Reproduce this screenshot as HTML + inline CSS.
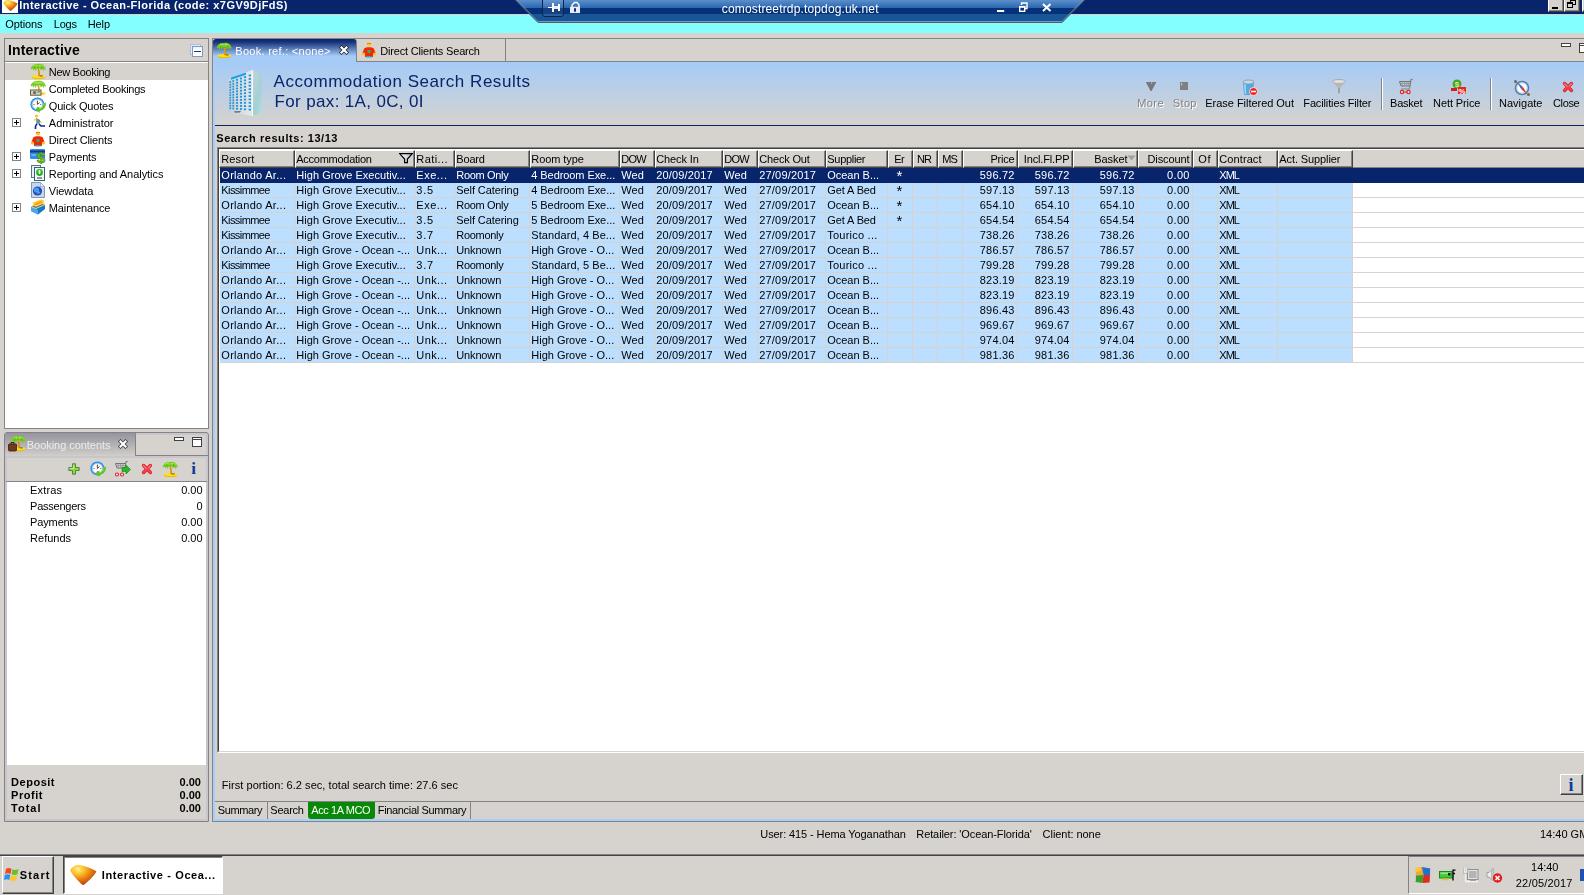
<!DOCTYPE html>
<html lang="en"><head><meta charset="utf-8"><title>Interactive - Ocean-Florida</title>
<style>
html,body{margin:0;padding:0;background:#d6d3ce;overflow:hidden;}
#root{position:relative;width:1584px;height:895px;overflow:hidden;background:#d6d3ce;font-family:"Liberation Sans",sans-serif;font-size:11px;color:#000;}
#root div,#root span.t,#root svg{position:absolute;}
#root div{box-sizing:border-box;}
span.t{white-space:pre;}
.hc{background:#d6d3ce;border-left:1px solid #fff;border-top:1px solid #fff;border-right:1px solid #424142;border-bottom:1px solid #424142;box-shadow:inset -1px -1px 0 #848284;}
.row{left:220px;height:15px;}
.vl{top:183px;width:1px;height:180px;background:#d6d3ce;}
.hl{left:220px;width:1364px;height:1px;background:#d6d3ce;}
.btn{background:#d6d3ce;border-left:1px solid #fff;border-top:1px solid #fff;border-right:1px solid #424142;border-bottom:1px solid #424142;box-shadow:inset -1px -1px 0 #848284;}
.exp{width:9px;height:9px;border:1px solid #848284;background:#fff;}
.exp:before{content:"";position:absolute;left:1px;top:3px;width:5px;height:1px;background:#000;}
.exp:after{content:"";position:absolute;left:3px;top:1px;width:1px;height:5px;background:#000;}
#txt{left:0;top:0;width:1584px;height:895px;will-change:transform;}

</style></head>
<body>
<div id="root">
<div style="left:0px;top:0px;width:1584px;height:14px;background:#08246b"></div>
<div style="left:2px;top:0px;width:16px;height:13px;background:#fff"></div>
<svg style="left:3px;top:0px" width="15" height="11" viewBox="0 0 18 13"><defs><radialGradient id="aia" cx="0.3" cy="0.22" r="0.85"><stop offset="0" stop-color="#fff0a0"/><stop offset="0.25" stop-color="#ffc830"/><stop offset="0.6" stop-color="#e87c10"/><stop offset="1" stop-color="#a83c08"/></radialGradient></defs><path d="M0.5 3.5 C1.5 1.5 3.5 0 6 0 C10 0.5 14 2 17.5 4 C17 6 13 10 9.5 12.8 C8.8 13.2 8 12.8 7.4 12 C5 9.5 2 6.5 0.5 3.5Z" fill="url(#aia)"/></svg>
<div class="btn" style="left:1548px;top:-2px;width:16px;height:14px;"><div style="left:3px;top:8px;width:6px;height:2px;background:#000"></div></div>
<div class="btn" style="left:1564px;top:-2px;width:16px;height:14px;"><div style="left:5px;top:0px;width:6px;height:6px;border:1px solid #000;border-top:2px solid #000"></div><div style="left:2px;top:3px;width:6px;height:6px;border:1px solid #000;border-top:2px solid #000;background:#d6d3ce"></div></div>
<div class="btn" style="left:1582px;top:-2px;width:16px;height:14px;"></div>
<div style="left:0px;top:14px;width:1584px;height:19px;background:#84ffff;border-top:1px solid #d6d3ce"></div>
<svg style="left:510px;top:0" width="580" height="24" viewBox="510 0 580 24"><defs><linearGradient id="rdp" x1="0" y1="0" x2="0" y2="22" gradientUnits="userSpaceOnUse"><stop offset="0" stop-color="#5c8fca"/><stop offset="0.36" stop-color="#2a66ae"/><stop offset="0.37" stop-color="#06327a"/><stop offset="0.64" stop-color="#06327a"/><stop offset="0.65" stop-color="#1a5696"/><stop offset="1" stop-color="#1a5696"/></linearGradient></defs><path d="M515.5 0 L1084.5 0 L1062.5 22 L537.5 22Z" fill="url(#rdp)"/><path d="M516.5 0 L538 21.5 L1062 21.5 L1083.5 0" fill="none" stroke="#6c9cd0" stroke-width="1"/><path d="M515.5 0 L538 22.5 L1062 22.5 L1084.5 0" fill="none" stroke="#5a5a5a" stroke-width="1"/><path d="M542.5 -1 L542.5 14 Q542.5 16.5 545 16.5 L561 16.5 Q563.5 16.5 563.5 14 L563.5 -1Z" fill="rgba(255,255,255,0.07)" stroke="#0a2650" stroke-width="1"/><rect x="548" y="7" width="5" height="1" fill="#fff"/><rect x="552" y="3" width="2" height="9" fill="#fff"/><rect x="554" y="6" width="4.3" height="3" fill="#e8ecf4"/><rect x="558" y="4" width="2" height="7" fill="#fff"/><rect x="570" y="6.7" width="10" height="6.4" fill="#e8ecf4"/><path d="M572 7 L572 5 L574.5 2.6 L577 2.6 L579 5 L579 7" stroke="#f4f6fa" stroke-width="1.5" fill="none"/><rect x="574" y="8.2" width="2" height="3.5" fill="#06327a"/><rect x="997" y="10" width="7.2" height="2" fill="#fff"/><path d="M1021.5 5 L1021.5 3 L1027 3 L1027 8.5 L1025 8.5" stroke="#fff" stroke-width="1.4" fill="none"/><rect x="1019.7" y="6.7" width="5" height="4.6" fill="none" stroke="#fff" stroke-width="1.4"/><rect x="1019" y="6" width="6.4" height="1.6" fill="#fff"/><path d="M1043 4 L1050.5 11 M1050.5 4 L1043 11" stroke="#fff" stroke-width="2"/></svg>
<div style="left:4px;top:38px;width:205px;height:391px;border:1px solid #848284;background:#fff"></div>
<div style="left:5px;top:39px;width:203px;height:23px;background:#d6d3ce;border-bottom:1px solid #848284"></div>
<div style="left:190px;top:44px;width:11px;height:11px;border:1px solid #b0bcd8;background:#dceefc"></div>
<div style="left:192px;top:46px;width:11px;height:11px;border:1px solid #8a96b8;background:linear-gradient(#e4f4ff,#fff 50%)"><div style="left:1px;top:4px;width:7px;height:1px;background:#0a3c80"></div></div>
<div style="left:5px;top:63px;width:203px;height:17px;background:#d6d3ce"></div>
<svg style="left:30px;top:63px" width="16" height="16" viewBox="0 0 16 16"><ellipse cx="8.3" cy="13.9" rx="7" ry="1.9" fill="#ffe210"/><path d="M2 14.6 C5 16 12 16 14.8 14.6" stroke="#e8b400" stroke-width="0.9" fill="none"/><path d="M7.3 5 C7.8 8 8.3 10 8.2 13.4 L10 13.4 C10 10 9.6 7.5 9.2 5Z" fill="#f2a416"/><path d="M8.3 7.5 L9.3 8 M8.6 9.7 L9.7 10.2 M8.6 12 L9.8 12.3" stroke="#a85a10" stroke-width="0.9"/><rect x="10" y="12.4" width="2.6" height="1" fill="#6c4a1c"/><path d="M0.6 5.6 C1.5 2.4 4.6 0.4 8 1 C11.4 0.2 14.6 2.2 15.6 5.4 L15.3 7.4 L14.2 5.6 L13.4 8.2 L12.2 5.6 L10.9 7.6 L9.8 5 L8.2 6 L6.8 5 L5.8 8.2 L4.7 5.6 L3.3 7.8 L2.6 5.4 L1 6.6Z" fill="#74cc20"/><path d="M2.5 4 C4 1.8 6 1.4 8 2.2 C10 1.2 12.5 1.8 14 4 C12 3 10 3 8 4 C6 3 4 3 2.5 4Z" fill="#a4e44c"/><path d="M8 2 L8 5.5 M5 3 L4.5 6 M11.5 3 L12 6" stroke="#4ca810" stroke-width="0.7"/></svg>
<svg style="left:30px;top:80px" width="16" height="16" viewBox="0 0 16 16"><ellipse cx="12" cy="13.6" rx="3.6" ry="1.4" fill="#ffd810"/><path d="M7.3 5 C7.8 8 8.3 9 8.2 11 L10 11 C10 9 9.6 7.5 9.2 5Z" fill="#f2a416"/><path d="M0.6 5.6 C1.5 2.4 4.6 0.4 8 1 C11.4 0.2 14.6 2.2 15.6 5.4 L15.3 7.4 L14.2 5.6 L13.4 8.2 L12.2 5.6 L10.9 7.6 L9.8 5 L8.2 6 L6.8 5 L5.8 8.2 L4.7 5.6 L3.3 7.8 L2.6 5.4 L1 6.6Z" fill="#74cc20"/><path d="M2.5 4 C4 1.8 6 1.4 8 2.2 C10 1.2 12.5 1.8 14 4 C12 3 10 3 8 4 C6 3 4 3 2.5 4Z" fill="#a4e44c"/><rect x="0.5" y="10" width="10.5" height="5.2" fill="#d6d4b8" stroke="#5c5a48" stroke-width="1"/><circle cx="4.6" cy="12.6" r="1.7" fill="#7c6468"/><rect x="7.4" y="11.4" width="2.4" height="1" fill="#5c5a48"/></svg>
<svg style="left:30px;top:97px" width="16" height="16" viewBox="0 0 16 16"><circle cx="7.4" cy="7.4" r="7" fill="#1c8cf4"/><circle cx="7.4" cy="7.4" r="6" fill="#4cb0ff"/><circle cx="7.4" cy="7.4" r="5" fill="#fcfcfc" stroke="#c8b8b0" stroke-width="0.6"/><path d="M7.4 4 L7.4 7.4 L9.6 5.6" stroke="#503828" stroke-width="0.9" fill="none"/><circle cx="4" cy="7.4" r="0.5" fill="#333"/><circle cx="10.8" cy="7.4" r="0.5" fill="#333"/><circle cx="7.4" cy="10.8" r="0.5" fill="#333"/><circle cx="7.4" cy="4" r="0.5" fill="#333"/><path d="M15.8 5.5 C16.4 10.5 13 13.6 9.6 13.4 L9.8 15.8 L4.8 12.6 L9.4 9.6 L9.5 11.4 C12 11.4 13.6 9.4 13.4 6.4Z" fill="#5cc424"/><path d="M9.5 11.4 C12 11.4 13.6 9.4 13.4 6.4" stroke="#9ae060" stroke-width="0.7" fill="none"/></svg>
<svg style="left:30px;top:114px" width="16" height="16" viewBox="0 0 16 16"><circle cx="6.5" cy="2" r="1.6" fill="#ffc020"/><path d="M6 4 L10 6 L9.5 10 L6.5 9Z" fill="#3c78c8"/><path d="M7 5 L9 6 L8.5 9 L7 8.5Z" fill="#70b030"/><path d="M4 6 L7 5.5 M10 7 L11.5 9" stroke="#ffb020" stroke-width="1.2"/><path d="M7 9.5 L5.5 12.5 L5.5 15 M9 10 L11 12 L15 12" stroke="#10208c" stroke-width="1.6" fill="none"/></svg>
<div class="exp" style="left:12px;top:118px;width:9px;height:9px;"></div>
<svg style="left:30px;top:131px" width="16" height="16" viewBox="0 0 16 16"><ellipse cx="8" cy="2.5" rx="2.3" ry="2" fill="#ffc828"/><path d="M6 1.5 L10 1.5" stroke="#e08000" stroke-width="1"/><path d="M3 7 C3 4.5 13 4.5 13 7 L14.5 11 L12 12 L12 15 L4 15 L4 12 L1.5 11Z" fill="#f02808"/><circle cx="2.5" cy="12" r="1.6" fill="#ffc020"/><circle cx="13.5" cy="12" r="1.6" fill="#ffc020"/><rect x="6.5" y="8" width="3" height="3" fill="#30b060"/><rect x="5" y="14" width="6" height="1.5" fill="#40a0c0"/></svg>
<svg style="left:30px;top:148px" width="16" height="16" viewBox="0 0 16 16"><rect x="0" y="1" width="15" height="10" rx="1" fill="#2f8be8"/><rect x="0" y="2.5" width="15" height="2" fill="#103c80"/><rect x="1.5" y="6.5" width="5" height="1" fill="#a0d0ff"/><text x="11" y="15" font-size="15" font-weight="bold" text-anchor="middle" fill="#78c818" stroke="#3c8008" stroke-width="0.5" font-family="Liberation Sans,sans-serif">$</text></svg>
<div class="exp" style="left:12px;top:152px;width:9px;height:9px;"></div>
<svg style="left:30px;top:165px" width="16" height="16" viewBox="0 0 16 16"><rect x="1.5" y="0.5" width="9" height="12" fill="#e8f0f4" stroke="#50788c"/><rect x="4.5" y="2.5" width="10" height="13" fill="#f4f8fa" stroke="#386078"/><circle cx="9.5" cy="7.5" r="3.4" fill="#20b020"/><circle cx="9.5" cy="6.8" r="2" fill="#60e040"/><path d="M9.5 5 L9.5 9" stroke="#fff" stroke-width="1.2"/><path d="M7 13 L12 13" stroke="#303030" stroke-width="1"/></svg>
<div class="exp" style="left:12px;top:169px;width:9px;height:9px;"></div>
<svg style="left:30px;top:182px" width="16" height="16" viewBox="0 0 16 16"><path d="M1.5 0.5 L10.5 0.5 L14.5 4.5 L14.5 15.5 L1.5 15.5Z" fill="#c8d8ec" stroke="#8098b8"/><path d="M10.5 0.5 L10.5 4.5 L14.5 4.5Z" fill="#f0f4fa" stroke="#8098b8" stroke-width="0.6"/><circle cx="7.5" cy="9" r="4.6" fill="#2848c8"/><circle cx="6.5" cy="8" r="2.6" fill="#40a0f0"/><path d="M5 10 C7 13 10 12 11 9 C9 11 7 11 5 10Z" fill="#a040c0"/><circle cx="8.5" cy="10.5" r="1.3" fill="#30c0c0"/></svg>
<svg style="left:30px;top:199px" width="16" height="16" viewBox="0 0 16 16"><path d="M1 8 L10 4 L15 6 L15 10 L8 15.5 L1 12Z" fill="#1878c8"/><path d="M1 8 L8 11 L8 15.5 L1 12Z" fill="#48a8f0"/><path d="M2 4 L11 0.5 L15 2 L6 6Z" fill="#ffc820"/><path d="M2 6 L11 2.5 L15 4 L6 8Z" fill="#ff9810"/><path d="M2 5 L6 7 L15 3" stroke="#fff0a0" stroke-width="0.8" fill="none"/><path d="M2 8 L6 9.5 L15 5.5" stroke="#ffd860" stroke-width="1" fill="none"/></svg>
<div class="exp" style="left:12px;top:203px;width:9px;height:9px;"></div>
<div style="left:4px;top:432px;width:205px;height:390px;border:1px solid #848284;border-radius:3px 3px 0 0;background:#d6d3ce;box-shadow:inset 0 0 0 2px #c8c6cc"></div>
<div style="left:5px;top:433px;width:131px;height:23px;background:linear-gradient(#96949c,#b2b0b6 50%,#d2cec8);border-right:1px solid #848284;border-radius:2px 0 0 0"></div>
<div style="left:136px;top:455px;width:72px;height:1px;background:#848284"></div>
<svg style="left:8px;top:435px" width="18" height="18" viewBox="0 0 18 18"><g transform="translate(2,0)"><ellipse cx="8.3" cy="13.9" rx="7" ry="1.9" fill="#ffe210"/><path d="M2 14.6 C5 16 12 16 14.8 14.6" stroke="#e8b400" stroke-width="0.9" fill="none"/><path d="M7.3 5 C7.8 8 8.3 10 8.2 13.4 L10 13.4 C10 10 9.6 7.5 9.2 5Z" fill="#f2a416"/><path d="M8.3 7.5 L9.3 8 M8.6 9.7 L9.7 10.2 M8.6 12 L9.8 12.3" stroke="#a85a10" stroke-width="0.9"/><rect x="10" y="12.4" width="2.6" height="1" fill="#6c4a1c"/><path d="M0.6 5.6 C1.5 2.4 4.6 0.4 8 1 C11.4 0.2 14.6 2.2 15.6 5.4 L15.3 7.4 L14.2 5.6 L13.4 8.2 L12.2 5.6 L10.9 7.6 L9.8 5 L8.2 6 L6.8 5 L5.8 8.2 L4.7 5.6 L3.3 7.8 L2.6 5.4 L1 6.6Z" fill="#74cc20"/><path d="M2.5 4 C4 1.8 6 1.4 8 2.2 C10 1.2 12.5 1.8 14 4 C12 3 10 3 8 4 C6 3 4 3 2.5 4Z" fill="#a4e44c"/><path d="M8 2 L8 5.5 M5 3 L4.5 6 M11.5 3 L12 6" stroke="#4ca810" stroke-width="0.7"/></g><rect x="0.5" y="9" width="8" height="7" rx="1" fill="#6c3c20" stroke="#3c1c08" stroke-width="0.8"/><path d="M3 9 L3 7.5 L6 7.5 L6 9" stroke="#3c1c08" fill="none"/></svg>
<svg style="left:117px;top:438px" width="12" height="12" viewBox="0 0 12 12"><path d="M3.5 3.5 L8.5 8.5 M8.5 3.5 L3.5 8.5" stroke="#383838" stroke-width="3.6" stroke-linecap="square"/><path d="M3.5 3.5 L8.5 8.5 M8.5 3.5 L3.5 8.5" stroke="#fff" stroke-width="2.2" stroke-linecap="square"/></svg>
<div style="left:174px;top:437px;width:10px;height:4px;border:1px solid #424142;background:#fff"></div>
<div style="left:192px;top:437px;width:10px;height:10px;border:1px solid #424142;background:#fff"><div style="left:0px;top:1px;width:8px;height:1px;background:#424142"></div></div>
<div style="left:5px;top:456px;width:203px;height:26px;border-bottom:1px solid #848284;border-left:2px solid #c8c6cc;border-right:2px solid #c8c6cc;border-top:2px solid #c8c6cc"></div>
<svg style="left:68px;top:463px" width="12" height="12" viewBox="0 0 12 12"><path d="M4.5 0.8 L7.5 0.8 L7.5 4.5 L11.2 4.5 L11.2 7.5 L7.5 7.5 L7.5 11.2 L4.5 11.2 L4.5 7.5 L0.8 7.5 L0.8 4.5 L4.5 4.5Z" fill="#a4cc44" stroke="#3c9040" stroke-width="1"/><path d="M5.4 1.8 L5.4 5.4 L1.8 5.4" stroke="#d4ec90" stroke-width="0.9" fill="none"/></svg>
<svg style="left:90px;top:461px" width="16" height="16" viewBox="0 0 16 16"><circle cx="7.4" cy="7.4" r="7" fill="#1c8cf4"/><circle cx="7.4" cy="7.4" r="6" fill="#4cb0ff"/><circle cx="7.4" cy="7.4" r="5" fill="#fcfcfc" stroke="#c8b8b0" stroke-width="0.6"/><path d="M7.4 4 L7.4 7.4 L9.6 5.6" stroke="#503828" stroke-width="0.9" fill="none"/><circle cx="4" cy="7.4" r="0.5" fill="#333"/><circle cx="10.8" cy="7.4" r="0.5" fill="#333"/><circle cx="7.4" cy="10.8" r="0.5" fill="#333"/><circle cx="7.4" cy="4" r="0.5" fill="#333"/><path d="M15.8 5.5 C16.4 10.5 13 13.6 9.6 13.4 L9.8 15.8 L4.8 12.6 L9.4 9.6 L9.5 11.4 C12 11.4 13.6 9.4 13.4 6.4Z" fill="#5cc424"/><path d="M9.5 11.4 C12 11.4 13.6 9.4 13.4 6.4" stroke="#9ae060" stroke-width="0.7" fill="none"/></svg>
<svg style="left:114px;top:461px" width="17" height="16" viewBox="0 0 17 16"><path d="M13.5 0.5 L12 0.5 L11 7 L3 7 L1.5 2.5 L11.5 2.5" fill="none" stroke="#707070" stroke-width="1"/><path d="M4 2.5 L4.5 7 M6.5 2.5 L6.7 7 M9 2.5 L8.8 7 M2 4.5 L11.3 4.5" stroke="#909090" stroke-width="0.8"/><circle cx="3" cy="13.5" r="1.5" fill="#fff" stroke="#e02020" stroke-width="1.1"/><circle cx="8" cy="13.5" r="1.5" fill="#fff" stroke="#e02020" stroke-width="1.1"/><path d="M8 6.5 L12 6.5 L12 4 L16.5 8.5 L12 13 L12 10.5 L8 10.5Z" fill="#28b828" stroke="#108010" stroke-width="0.6"/></svg>
<svg style="left:140.5px;top:463px" width="12" height="12" viewBox="0 0 14 14"><path d="M3 3 L11 11 M11 3 L3 11" stroke="#d82028" stroke-width="4" stroke-linecap="round"/><path d="M3 3 L11 11 M11 3 L3 11" stroke="#f04048" stroke-width="2.8" stroke-linecap="round"/><path d="M3 3.4 L6 6.4 M11 3.4 L8.6 5.8" stroke="#f88088" stroke-width="1.2" stroke-linecap="round"/></svg>
<svg style="left:162px;top:461px" width="16" height="16" viewBox="0 0 16 16"><ellipse cx="8.3" cy="13.9" rx="7" ry="1.9" fill="#ffe210"/><path d="M2 14.6 C5 16 12 16 14.8 14.6" stroke="#e8b400" stroke-width="0.9" fill="none"/><path d="M7.3 5 C7.8 8 8.3 10 8.2 13.4 L10 13.4 C10 10 9.6 7.5 9.2 5Z" fill="#f2a416"/><path d="M8.3 7.5 L9.3 8 M8.6 9.7 L9.7 10.2 M8.6 12 L9.8 12.3" stroke="#a85a10" stroke-width="0.9"/><rect x="10" y="12.4" width="2.6" height="1" fill="#6c4a1c"/><path d="M0.6 5.6 C1.5 2.4 4.6 0.4 8 1 C11.4 0.2 14.6 2.2 15.6 5.4 L15.3 7.4 L14.2 5.6 L13.4 8.2 L12.2 5.6 L10.9 7.6 L9.8 5 L8.2 6 L6.8 5 L5.8 8.2 L4.7 5.6 L3.3 7.8 L2.6 5.4 L1 6.6Z" fill="#74cc20"/><path d="M2.5 4 C4 1.8 6 1.4 8 2.2 C10 1.2 12.5 1.8 14 4 C12 3 10 3 8 4 C6 3 4 3 2.5 4Z" fill="#a4e44c"/><path d="M8 2 L8 5.5 M5 3 L4.5 6 M11.5 3 L12 6" stroke="#4ca810" stroke-width="0.7"/></svg>
<span class="t" style="left:191.3px;top:460px;font-family:&quot;Liberation Serif&quot;,serif;font-weight:bold;font-size:17px;line-height:17px;color:#0a3c9c">i</span>
<div style="left:7px;top:482px;width:199px;height:283px;background:#fff"></div>
<div style="left:212px;top:38px;width:1372px;height:1px;background:#848284"></div>
<div style="left:212px;top:39px;width:1px;height:23px;background:#848284"></div>
<div style="left:356px;top:61px;width:1228px;height:1px;background:#848284"></div>
<div style="left:505px;top:39px;width:1px;height:23px;background:#848284"></div>
<div style="left:213px;top:39px;width:144px;height:23px;background:linear-gradient(#08246b 0,#16327a 3px,#a5cbf7 17px,#a5cbf7);border-radius:3px 3px 0 0;border-right:1px solid #848284"></div>
<svg style="left:216px;top:42px" width="16" height="16" viewBox="0 0 16 16"><ellipse cx="8.3" cy="13.9" rx="7" ry="1.9" fill="#ffe210"/><path d="M2 14.6 C5 16 12 16 14.8 14.6" stroke="#e8b400" stroke-width="0.9" fill="none"/><path d="M7.3 5 C7.8 8 8.3 10 8.2 13.4 L10 13.4 C10 10 9.6 7.5 9.2 5Z" fill="#f2a416"/><path d="M8.3 7.5 L9.3 8 M8.6 9.7 L9.7 10.2 M8.6 12 L9.8 12.3" stroke="#a85a10" stroke-width="0.9"/><rect x="10" y="12.4" width="2.6" height="1" fill="#6c4a1c"/><path d="M0.6 5.6 C1.5 2.4 4.6 0.4 8 1 C11.4 0.2 14.6 2.2 15.6 5.4 L15.3 7.4 L14.2 5.6 L13.4 8.2 L12.2 5.6 L10.9 7.6 L9.8 5 L8.2 6 L6.8 5 L5.8 8.2 L4.7 5.6 L3.3 7.8 L2.6 5.4 L1 6.6Z" fill="#74cc20"/><path d="M2.5 4 C4 1.8 6 1.4 8 2.2 C10 1.2 12.5 1.8 14 4 C12 3 10 3 8 4 C6 3 4 3 2.5 4Z" fill="#a4e44c"/><path d="M8 2 L8 5.5 M5 3 L4.5 6 M11.5 3 L12 6" stroke="#4ca810" stroke-width="0.7"/></svg>
<svg style="left:338.2px;top:44px" width="12" height="12" viewBox="0 0 12 12"><path d="M3.5 3.5 L8.5 8.5 M8.5 3.5 L3.5 8.5" stroke="#202020" stroke-width="3.6" stroke-linecap="square"/><path d="M3.5 3.5 L8.5 8.5 M8.5 3.5 L3.5 8.5" stroke="#fff" stroke-width="2.2" stroke-linecap="square"/></svg>
<svg style="left:361px;top:42px" width="16" height="16" viewBox="0 0 16 16"><ellipse cx="8" cy="2.5" rx="2.3" ry="2" fill="#ffc828"/><path d="M6 1.5 L10 1.5" stroke="#e08000" stroke-width="1"/><path d="M3 7 C3 4.5 13 4.5 13 7 L14.5 11 L12 12 L12 15 L4 15 L4 12 L1.5 11Z" fill="#f02808"/><circle cx="2.5" cy="12" r="1.6" fill="#ffc020"/><circle cx="13.5" cy="12" r="1.6" fill="#ffc020"/><rect x="6.5" y="8" width="3" height="3" fill="#30b060"/><rect x="5" y="14" width="6" height="1.5" fill="#40a0c0"/></svg>
<div style="left:1561px;top:43px;width:10px;height:4px;border:1px solid #424142;background:#fff"></div>
<div style="left:1579px;top:43px;width:10px;height:10px;border:1px solid #424142;background:#fff"><div style="left:0px;top:1px;width:8px;height:1px;background:#424142"></div></div>
<div style="left:212px;top:39px;width:1px;height:783px;background:#848284"></div>
<div style="left:212px;top:821px;width:1372px;height:1px;background:#848284"></div>
<div style="left:213px;top:62px;width:2px;height:759px;background:#a5cfff"></div>
<div style="left:213px;top:819px;width:1371px;height:2px;background:#a5cfff"></div>
<div style="left:215px;top:62px;width:1369px;height:63px;background:linear-gradient(#a5cbf7,#d6d3ce)"></div>
<div style="left:215px;top:125px;width:1369px;height:1px;background:#08246b"></div>
<svg style="left:226px;top:68px" width="38" height="50" viewBox="0 0 38 50"><defs><linearGradient id="bs" x1="0" x2="1" y1="0" y2="1"><stop offset="0" stop-color="#c4d4d8"/><stop offset="0.6" stop-color="#a4d0d6"/><stop offset="1" stop-color="#b4e0e4"/></linearGradient><linearGradient id="bf" x1="0" x2="1"><stop offset="0" stop-color="#c4ced4"/><stop offset="1" stop-color="#e6eaec"/></linearGradient></defs><path d="M2 10 L26.5 2 L26.5 48 L2 44Z" fill="url(#bf)"/><path d="M26.5 2 L36 6 L36 44.5 L26.5 48Z" fill="url(#bs)"/><path d="M26.5 2 L26.5 48" stroke="#f8fafa" stroke-width="1"/><path d="M5 9.4 L20 4.4 L20 6.8 L5 11.8Z" fill="#10a4f4"/><rect x="3.5" y="13.2" width="1.6" height="1.8" fill="#1c94e4"/><rect x="3.5" y="15.8" width="1.6" height="1.8" fill="#1c94e4"/><rect x="3.5" y="18.4" width="1.6" height="1.8" fill="#1c94e4"/><rect x="3.5" y="21.1" width="1.6" height="1.8" fill="#1c94e4"/><rect x="3.5" y="23.7" width="1.6" height="1.8" fill="#1c94e4"/><rect x="3.5" y="26.3" width="1.6" height="1.8" fill="#1c94e4"/><rect x="3.5" y="28.9" width="1.6" height="1.8" fill="#1c94e4"/><rect x="3.5" y="31.5" width="1.6" height="1.8" fill="#1c94e4"/><rect x="3.5" y="34.2" width="1.6" height="1.8" fill="#1c94e4"/><rect x="3.5" y="36.8" width="1.6" height="1.8" fill="#1c94e4"/><rect x="3.5" y="39.4" width="1.6" height="1.8" fill="#1c94e4"/><rect x="6.4" y="12.2" width="1.7" height="1.8" fill="#1c94e4"/><rect x="6.4" y="14.9" width="1.7" height="1.8" fill="#1c94e4"/><rect x="6.4" y="17.7" width="1.7" height="1.8" fill="#1c94e4"/><rect x="6.4" y="20.4" width="1.7" height="1.8" fill="#1c94e4"/><rect x="6.4" y="23.2" width="1.7" height="1.8" fill="#1c94e4"/><rect x="6.4" y="25.9" width="1.7" height="1.8" fill="#1c94e4"/><rect x="6.4" y="28.6" width="1.7" height="1.8" fill="#1c94e4"/><rect x="6.4" y="31.4" width="1.7" height="1.8" fill="#1c94e4"/><rect x="6.4" y="34.1" width="1.7" height="1.8" fill="#1c94e4"/><rect x="6.4" y="36.9" width="1.7" height="1.8" fill="#1c94e4"/><rect x="6.4" y="39.6" width="1.7" height="1.8" fill="#1c94e4"/><rect x="10.1" y="10.9" width="1.9" height="1.8" fill="#1c94e4"/><rect x="10.1" y="13.8" width="1.9" height="1.8" fill="#1c94e4"/><rect x="10.1" y="16.7" width="1.9" height="1.8" fill="#1c94e4"/><rect x="10.1" y="19.6" width="1.9" height="1.8" fill="#1c94e4"/><rect x="10.1" y="22.5" width="1.9" height="1.8" fill="#1c94e4"/><rect x="10.1" y="25.4" width="1.9" height="1.8" fill="#1c94e4"/><rect x="10.1" y="28.3" width="1.9" height="1.8" fill="#1c94e4"/><rect x="10.1" y="31.2" width="1.9" height="1.8" fill="#1c94e4"/><rect x="10.1" y="34.1" width="1.9" height="1.8" fill="#1c94e4"/><rect x="10.1" y="37.0" width="1.9" height="1.8" fill="#1c94e4"/><rect x="10.1" y="39.9" width="1.9" height="1.8" fill="#1c94e4"/><rect x="14.0" y="9.6" width="2.0" height="1.8" fill="#1c94e4"/><rect x="14.0" y="12.6" width="2.0" height="1.8" fill="#1c94e4"/><rect x="14.0" y="15.7" width="2.0" height="1.8" fill="#1c94e4"/><rect x="14.0" y="18.7" width="2.0" height="1.8" fill="#1c94e4"/><rect x="14.0" y="21.8" width="2.0" height="1.8" fill="#1c94e4"/><rect x="14.0" y="24.8" width="2.0" height="1.8" fill="#1c94e4"/><rect x="14.0" y="27.9" width="2.0" height="1.8" fill="#1c94e4"/><rect x="14.0" y="31.0" width="2.0" height="1.8" fill="#1c94e4"/><rect x="14.0" y="34.0" width="2.0" height="1.8" fill="#1c94e4"/><rect x="14.0" y="37.1" width="2.0" height="1.8" fill="#1c94e4"/><rect x="14.0" y="40.1" width="2.0" height="1.8" fill="#1c94e4"/><rect x="17.9" y="8.2" width="2.2" height="1.8" fill="#1c94e4"/><rect x="17.9" y="11.4" width="2.2" height="1.8" fill="#1c94e4"/><rect x="17.9" y="14.6" width="2.2" height="1.8" fill="#1c94e4"/><rect x="17.9" y="17.9" width="2.2" height="1.8" fill="#1c94e4"/><rect x="17.9" y="21.1" width="2.2" height="1.8" fill="#1c94e4"/><rect x="17.9" y="24.3" width="2.2" height="1.8" fill="#1c94e4"/><rect x="17.9" y="27.5" width="2.2" height="1.8" fill="#1c94e4"/><rect x="17.9" y="30.7" width="2.2" height="1.8" fill="#1c94e4"/><rect x="17.9" y="33.9" width="2.2" height="1.8" fill="#1c94e4"/><rect x="17.9" y="37.2" width="2.2" height="1.8" fill="#1c94e4"/><rect x="17.9" y="40.4" width="2.2" height="1.8" fill="#1c94e4"/><rect x="22.6" y="6.6" width="2.4" height="1.8" fill="#1c94e4"/><rect x="22.6" y="10.0" width="2.4" height="1.8" fill="#1c94e4"/><rect x="22.6" y="13.4" width="2.4" height="1.8" fill="#1c94e4"/><rect x="22.6" y="16.8" width="2.4" height="1.8" fill="#1c94e4"/><rect x="22.6" y="20.2" width="2.4" height="1.8" fill="#1c94e4"/><rect x="22.6" y="23.6" width="2.4" height="1.8" fill="#1c94e4"/><rect x="22.6" y="27.1" width="2.4" height="1.8" fill="#1c94e4"/><rect x="22.6" y="30.5" width="2.4" height="1.8" fill="#1c94e4"/><rect x="22.6" y="33.9" width="2.4" height="1.8" fill="#1c94e4"/><rect x="22.6" y="37.3" width="2.4" height="1.8" fill="#1c94e4"/><rect x="22.6" y="40.7" width="2.4" height="1.8" fill="#1c94e4"/><path d="M8 43.2 L15 43 L14 44.6 L9 44.8Z" fill="#687078"/></svg>
<svg style="left:1142px;top:79px" width="16" height="16" viewBox="0 0 16 16"><path d="M3.8 3 L14.4 3 L9.6 12 L8.6 12Z" fill="#787878"/><rect x="9" y="3.6" width="1.2" height="1" fill="#d8d8d8"/></svg>
<svg style="left:1176px;top:79px" width="16" height="16" viewBox="0 0 16 16"><rect x="4" y="3" width="8" height="8" fill="#808080"/><rect x="5.2" y="4" width="1" height="2.4" fill="#d0d0d0"/></svg>
<svg style="left:1241px;top:79px" width="18" height="18" viewBox="0 0 18 18"><path d="M2 3 L13 3 L12 16 L3 16Z" fill="#58a8e0"/><ellipse cx="7.5" cy="3" rx="5.5" ry="2" fill="#c0d8e8" stroke="#8098a8" stroke-width="0.8"/><path d="M4 5 L4.5 15" stroke="#a0d8ff" stroke-width="1.5"/><circle cx="12.5" cy="12.5" r="4" fill="#f02020" stroke="#fff" stroke-width="0.8"/><rect x="10" y="11.7" width="5" height="1.6" fill="#fff"/></svg>
<svg style="left:1331px;top:79px" width="16" height="16" viewBox="0 0 16 16"><ellipse cx="8" cy="2.5" rx="6.5" ry="2" fill="#e0e0e0" stroke="#a0a0a0" stroke-width="0.8"/><path d="M1.5 3 L7 9 L7 15 L9 14 L9 9 L14.5 3 C12 5 4 5 1.5 3Z" fill="#b8b8b8"/><path d="M8 9 L8 14" stroke="#888" stroke-width="1"/></svg>
<svg style="left:1398px;top:79px" width="16" height="16" viewBox="0 0 16 16"><path d="M14.5 0.5 L13 0.5 L12 7 L3 7 L1.5 2.5 L12.5 2.5" fill="none" stroke="#707070" stroke-width="1"/><path d="M4 2.5 L4.5 7 M6.5 2.5 L6.7 7 M9 2.5 L8.8 7 M11 2.5 L10.5 7 M2 4.5 L12.3 4.5" stroke="#909090" stroke-width="0.8"/><path d="M12 7 L11.5 10 L3 10" fill="none" stroke="#808080" stroke-width="1"/><circle cx="4" cy="13" r="1.6" fill="#fff" stroke="#e02020" stroke-width="1.2"/><circle cx="10.5" cy="13" r="1.6" fill="#fff" stroke="#e02020" stroke-width="1.2"/><path d="M5.5 13 L9 13" stroke="#e02020" stroke-width="1"/></svg>
<svg style="left:1450px;top:79px" width="18" height="16" viewBox="0 0 18 16"><circle cx="7" cy="5" r="4.5" fill="#48a828"/><text x="7" y="8" font-size="8" font-weight="bold" text-anchor="middle" fill="#c8f0a0" font-family="Liberation Sans,sans-serif">$</text><rect x="1" y="9" width="6" height="3" fill="#e01818"/><path d="M8 8 L16 8 L16 15 L8 15Z" fill="#f02020"/><text x="12" y="14.5" font-size="8" font-weight="bold" text-anchor="middle" fill="#fff" font-family="Liberation Sans,sans-serif">%</text></svg>
<svg style="left:1513px;top:79px" width="18" height="18" viewBox="0 0 18 18"><circle cx="9" cy="9" r="6.5" fill="#f4f8ff" stroke="#5080b0" stroke-width="1.6"/><circle cx="9" cy="9" r="5" fill="#fff" stroke="#a0c0e0" stroke-width="0.6"/><path d="M4 3 L10 8 L8 10Z" fill="#3070d0"/><path d="M14 15 L10 8 L8 10Z" fill="#e03020"/><circle cx="2.5" cy="2.5" r="1.5" fill="#806040"/><circle cx="15.5" cy="15.5" r="1.5" fill="#806040"/></svg>
<svg style="left:1562px;top:81px" width="12" height="12" viewBox="0 0 14 14"><path d="M3 3 L11 11 M11 3 L3 11" stroke="#d82028" stroke-width="4" stroke-linecap="round"/><path d="M3 3 L11 11 M11 3 L3 11" stroke="#f04048" stroke-width="2.8" stroke-linecap="round"/><path d="M3 3.4 L6 6.4 M11 3.4 L8.6 5.8" stroke="#f88088" stroke-width="1.2" stroke-linecap="round"/></svg>
<div style="left:1381px;top:78px;width:1px;height:32px;background:#848284"></div>
<div style="left:1382px;top:78px;width:1px;height:32px;background:#fff"></div>
<div style="left:1490px;top:78px;width:1px;height:32px;background:#848284"></div>
<div style="left:1491px;top:78px;width:1px;height:32px;background:#fff"></div>
<div style="left:217px;top:147px;width:1367px;height:606px;background:#fff;border-left:1px solid #848284;border-top:1px solid #848284;border-bottom:1px solid #fff"></div>
<div style="left:218px;top:148px;width:1366px;height:604px;border-left:1px solid #424142;border-top:1px solid #424142;border-bottom:1px solid #d6d3ce"></div>
<div style="left:219px;top:149px;width:1365px;height:19px;background:#d6d3ce;border-bottom:1px solid #848284;border-top:1px solid #fff"></div>
<div style="left:220px;top:168px;width:1364px;height:15px;background:#08246b"></div>
<div style="left:220px;top:183px;width:1133px;height:180px;background:#bddfff"></div>
<div style="left:220px;top:197px;width:1364px;height:1px;background:#d6d3ce"></div>
<div style="left:220px;top:212px;width:1364px;height:1px;background:#d6d3ce"></div>
<div style="left:220px;top:227px;width:1364px;height:1px;background:#d6d3ce"></div>
<div style="left:220px;top:242px;width:1364px;height:1px;background:#d6d3ce"></div>
<div style="left:220px;top:257px;width:1364px;height:1px;background:#d6d3ce"></div>
<div style="left:220px;top:272px;width:1364px;height:1px;background:#d6d3ce"></div>
<div style="left:220px;top:287px;width:1364px;height:1px;background:#d6d3ce"></div>
<div style="left:220px;top:302px;width:1364px;height:1px;background:#d6d3ce"></div>
<div style="left:220px;top:317px;width:1364px;height:1px;background:#d6d3ce"></div>
<div style="left:220px;top:332px;width:1364px;height:1px;background:#d6d3ce"></div>
<div style="left:220px;top:347px;width:1364px;height:1px;background:#d6d3ce"></div>
<div style="left:220px;top:362px;width:1364px;height:1px;background:#d6d3ce"></div>
<div class="hc" style="left:219px;top:150px;width:76px;height:18px;"></div>
<div style="left:294px;top:183px;width:1px;height:180px;background:#d6d3ce"></div>
<div class="hc" style="left:295px;top:150px;width:120px;height:18px;"></div>
<div style="left:414px;top:183px;width:1px;height:180px;background:#d6d3ce"></div>
<div class="hc" style="left:415px;top:150px;width:40px;height:18px;"></div>
<div style="left:454px;top:183px;width:1px;height:180px;background:#d6d3ce"></div>
<div class="hc" style="left:455px;top:150px;width:75px;height:18px;"></div>
<div style="left:529px;top:183px;width:1px;height:180px;background:#d6d3ce"></div>
<div class="hc" style="left:530px;top:150px;width:90px;height:18px;"></div>
<div style="left:619px;top:183px;width:1px;height:180px;background:#d6d3ce"></div>
<div class="hc" style="left:620px;top:150px;width:35px;height:18px;"></div>
<div style="left:654px;top:183px;width:1px;height:180px;background:#d6d3ce"></div>
<div class="hc" style="left:655px;top:150px;width:68px;height:18px;"></div>
<div style="left:722px;top:183px;width:1px;height:180px;background:#d6d3ce"></div>
<div class="hc" style="left:723px;top:150px;width:35px;height:18px;"></div>
<div style="left:757px;top:183px;width:1px;height:180px;background:#d6d3ce"></div>
<div class="hc" style="left:758px;top:150px;width:68px;height:18px;"></div>
<div style="left:825px;top:183px;width:1px;height:180px;background:#d6d3ce"></div>
<div class="hc" style="left:826px;top:150px;width:62px;height:18px;"></div>
<div style="left:887px;top:183px;width:1px;height:180px;background:#d6d3ce"></div>
<div class="hc" style="left:888px;top:150px;width:25px;height:18px;"></div>
<div style="left:912px;top:183px;width:1px;height:180px;background:#d6d3ce"></div>
<div class="hc" style="left:913px;top:150px;width:25px;height:18px;"></div>
<div style="left:937px;top:183px;width:1px;height:180px;background:#d6d3ce"></div>
<div class="hc" style="left:938px;top:150px;width:25px;height:18px;"></div>
<div style="left:962px;top:183px;width:1px;height:180px;background:#d6d3ce"></div>
<div class="hc" style="left:963px;top:150px;width:55px;height:18px;"></div>
<div style="left:1017px;top:183px;width:1px;height:180px;background:#d6d3ce"></div>
<div class="hc" style="left:1018px;top:150px;width:55px;height:18px;"></div>
<div style="left:1072px;top:183px;width:1px;height:180px;background:#d6d3ce"></div>
<div class="hc" style="left:1073px;top:150px;width:65px;height:18px;"></div>
<div style="left:1137px;top:183px;width:1px;height:180px;background:#d6d3ce"></div>
<div class="hc" style="left:1138px;top:150px;width:55px;height:18px;"></div>
<div style="left:1192px;top:183px;width:1px;height:180px;background:#d6d3ce"></div>
<div class="hc" style="left:1193px;top:150px;width:25px;height:18px;"></div>
<div style="left:1217px;top:183px;width:1px;height:180px;background:#d6d3ce"></div>
<div class="hc" style="left:1218px;top:150px;width:60px;height:18px;"></div>
<div style="left:1277px;top:183px;width:1px;height:180px;background:#d6d3ce"></div>
<div class="hc" style="left:1278px;top:150px;width:75px;height:18px;"></div>
<div style="left:1352px;top:183px;width:1px;height:180px;background:#d6d3ce"></div>
<svg style="left:398.5px;top:153px" width="14" height="12" viewBox="0 0 14 12"><defs><linearGradient id="fg" x1="0" x2="1"><stop offset="0" stop-color="#fff"/><stop offset="1" stop-color="#a8b8d0"/></linearGradient></defs><path d="M0.6 0.6 L13.4 0.6 L8.4 6 L8.4 9.6 L5.6 9.6 L5.6 6Z" fill="url(#fg)" stroke="#000" stroke-width="1.2"/></svg>
<svg style="left:1127px;top:155px" width="9" height="6" viewBox="0 0 9 6"><path d="M0.5 0.5 L8.5 0.5 L4.5 5.5Z" fill="#a0a0a0"/></svg>
<div class="btn" style="left:1560px;top:774px;width:23px;height:21px;"></div>
<span class="t" style="left:1568.5px;top:775.5px;font-family:&quot;Liberation Serif&quot;,serif;font-weight:bold;font-size:18px;line-height:18px;color:#0a3c9c">i</span>
<div style="left:215px;top:801px;width:1369px;height:1px;background:#848284"></div>
<div style="left:267px;top:802px;width:1px;height:17px;background:#848284"></div>
<div style="left:308px;top:802px;width:67px;height:17px;background:#088a08;border-radius:0 0 3px 3px"></div>
<div style="left:470px;top:802px;width:1px;height:17px;background:#848284"></div>
<div style="left:0px;top:854px;width:1584px;height:1px;background:#848284"></div>
<div style="left:0px;top:855px;width:1584px;height:1px;background:#424142"></div>
<div class="btn" style="left:2px;top:856px;width:52px;height:38px;"></div>
<svg style="left:4px;top:866px" width="16" height="16" viewBox="0 0 16 16"><path d="M2 3 C4 1.5 6 2 7.5 3 L6.5 8 C5 7 3 6.8 1 8Z" fill="#f04820"/><path d="M8.5 3.3 C10 4.3 12 4.5 14.5 3 L13.5 8 C11.5 9.3 9.5 9 7.5 8.2Z" fill="#68c028"/><path d="M0.8 9 C3 7.8 5 8 6.3 9 L5.3 14 C4 13 2 12.8 0 14Z" fill="#2890f0"/><path d="M7.3 9.3 C9 10.3 11 10.5 13.3 9 L12.3 14 C10.5 15.3 8.5 15 6.3 14.2Z" fill="#ffc820"/></svg>
<div style="left:63px;top:856px;width:160px;height:38px;background:#fff;border-left:1px solid #424142;border-top:1px solid #424142;border-right:1px solid #fff;border-bottom:1px solid #fff;box-shadow:inset 1px 1px 0 #848284"></div>
<svg style="left:69px;top:865px" width="28.5" height="20" viewBox="0 0 18 13"><defs><radialGradient id="aib" cx="0.3" cy="0.22" r="0.85"><stop offset="0" stop-color="#fff0a0"/><stop offset="0.25" stop-color="#ffc830"/><stop offset="0.6" stop-color="#e87c10"/><stop offset="1" stop-color="#a83c08"/></radialGradient></defs><path d="M0.5 3.5 C1.5 1.5 3.5 0 6 0 C10 0.5 14 2 17.5 4 C17 6 13 10 9.5 12.8 C8.8 13.2 8 12.8 7.4 12 C5 9.5 2 6.5 0.5 3.5Z" fill="url(#aib)"/></svg>
<div style="left:1408px;top:856px;width:180px;height:38px;border-left:1px solid #848284;border-top:1px solid #848284;border-bottom:1px solid #fff"></div>
<svg style="left:1415px;top:867px" width="16" height="16" viewBox="0 0 16 16"><path d="M0.5 1 L7 0 L8.5 8 L0.5 8.5Z" fill="#f8a428"/><path d="M1 1 L6 0.5 L6 4 L1 5Z" fill="#f8c838"/><path d="M7 0 L15.5 1.5 L15 8 L8.5 8Z" fill="#1c74cc"/><path d="M0.5 8.5 L8.5 8 L7.5 16 L0.5 15Z" fill="#38a030"/><path d="M8.5 8 L15 8 L14.5 15.5 L7.5 16Z" fill="#e02c1c"/><path d="M0 2 L1 3 L0 4 L1 5 L0 6 L1 7 L0 8 L1 9 L0 10 L1 11 L0 12 L1 13 L0 14" stroke="#d4d0c8" stroke-width="0.8" fill="none"/><path d="M16 2 L15 3 L16 4 L15 5 L16 6 L15 7 L16 8 L15 9 L16 10 L15 11 L16 12 L15 13 L16 14" stroke="#d4d0c8" stroke-width="0.8" fill="none"/></svg>
<svg style="left:1439px;top:867px" width="17" height="16" viewBox="0 0 17 16"><rect x="0.5" y="4.5" width="12.5" height="6.5" fill="#48c848" stroke="#188818"/><rect x="1.5" y="5.5" width="10" height="1.5" fill="#90e890"/><rect x="3" y="11.5" width="6.5" height="1.8" fill="#d8c828"/><rect x="9" y="6" width="2.5" height="2.5" fill="#082808"/><path d="M14 2.5 L14 13.5 M14 3.2 L16.5 3.2 M14 6.5 L16 6.5" stroke="#000" stroke-width="1.3"/></svg>
<svg style="left:1463px;top:867px" width="16" height="16" viewBox="0 0 16 16"><rect x="4.5" y="2.5" width="10.5" height="10" fill="#e4e4e4" stroke="#909090"/><rect x="6" y="4" width="7.5" height="7" fill="#b4b4b8"/><path d="M4 14.5 L15 14.5" stroke="#f4f4f4" stroke-width="1.6"/><path d="M7 13.5 L13 13.5" stroke="#a0a0a0" stroke-width="1"/><path d="M2.5 5 L2.5 14.5 L5 14.5" stroke="#f0f0f0" stroke-width="1.4" fill="none"/><path d="M1 0.5 L1 5.5 L4 5.5 L4 0.5" stroke="#f4f4f4" stroke-width="1.3" fill="none"/><path d="M0.3 0.5 L0.3 6.2 L4.7 6.2 L4.7 0.5" stroke="#808080" stroke-width="0.5" fill="none"/></svg>
<svg style="left:1486px;top:867px" width="17" height="16" viewBox="0 0 17 16"><path d="M1 5.5 L3 5.5 L7 1.5 L7 13.5 L3 10 L1 10Z" fill="#f0f0f0" stroke="#909090" stroke-width="0.8"/><path d="M5.5 3.5 L5.5 11.5" stroke="#b8b8b8" stroke-width="1.2"/><circle cx="11.5" cy="11" r="4.7" fill="#e81c1c"/><path d="M9.5 9 L13.5 13 M13.5 9 L9.5 13" stroke="#fff" stroke-width="1.7"/></svg>
<div style="left:1580px;top:869px;width:4px;height:12px;background:#2050b0"></div>
<div id="txt">
<span class="t" style="top:-2.31px;font-size:11px;line-height:15px;color:#fff;font-weight:bold;letter-spacing:0.459px;left:19.30px;">Interactive - Ocean-Florida (code: x7GV9DjFdS)</span>
<span class="t" style="top:16.69px;font-size:11px;line-height:15px;color:#000;letter-spacing:-0.120px;left:5.30px;">Options</span>
<span class="t" style="top:16.69px;font-size:11px;line-height:15px;color:#000;letter-spacing:-0.220px;left:53.80px;">Logs</span>
<span class="t" style="top:16.69px;font-size:11px;line-height:15px;color:#000;letter-spacing:-0.142px;left:87.80px;">Help</span>
<span class="t" style="top:0.84px;font-size:12px;line-height:16px;color:#fff;letter-spacing:0.151px;left:721.80px;">comostreetrdp.topdog.uk.net</span>
<span class="t" style="top:41.15px;font-size:14px;line-height:18px;color:#000;font-weight:bold;letter-spacing:0.165px;left:8.00px;">Interactive</span>
<span class="t" style="top:64.69px;font-size:11px;line-height:15px;color:#000;letter-spacing:-0.313px;left:48.80px;">New Booking</span>
<span class="t" style="top:81.69px;font-size:11px;line-height:15px;color:#000;letter-spacing:-0.283px;left:48.80px;">Completed Bookings</span>
<span class="t" style="top:98.69px;font-size:11px;line-height:15px;color:#000;letter-spacing:-0.176px;left:48.80px;">Quick Quotes</span>
<span class="t" style="top:115.69px;font-size:11px;line-height:15px;color:#000;letter-spacing:-0.008px;left:48.80px;">Administrator</span>
<span class="t" style="top:132.69px;font-size:11px;line-height:15px;color:#000;letter-spacing:-0.131px;left:48.80px;">Direct Clients</span>
<span class="t" style="top:149.69px;font-size:11px;line-height:15px;color:#000;letter-spacing:-0.175px;left:48.80px;">Payments</span>
<span class="t" style="top:166.69px;font-size:11px;line-height:15px;color:#000;letter-spacing:-0.040px;left:48.80px;">Reporting and Analytics</span>
<span class="t" style="top:183.69px;font-size:11px;line-height:15px;color:#000;letter-spacing:-0.052px;left:48.80px;">Viewdata</span>
<span class="t" style="top:200.69px;font-size:11px;line-height:15px;color:#000;letter-spacing:-0.130px;left:48.80px;">Maintenance</span>
<span class="t" style="top:437.69px;font-size:11px;line-height:15px;color:#ececec;letter-spacing:-0.046px;left:26.80px;">Booking contents</span>
<span class="t" style="top:482.69px;font-size:11px;line-height:15px;color:#000;letter-spacing:0.142px;left:30.10px;">Extras</span>
<span class="t" style="top:482.69px;font-size:11px;line-height:15px;color:#000;right:1381.40px;">0.00</span>
<span class="t" style="top:498.69px;font-size:11px;line-height:15px;color:#000;letter-spacing:-0.244px;left:30.10px;">Passengers</span>
<span class="t" style="top:498.69px;font-size:11px;line-height:15px;color:#000;right:1381.40px;">0</span>
<span class="t" style="top:514.69px;font-size:11px;line-height:15px;color:#000;letter-spacing:-0.146px;left:30.10px;">Payments</span>
<span class="t" style="top:514.69px;font-size:11px;line-height:15px;color:#000;right:1381.40px;">0.00</span>
<span class="t" style="top:530.69px;font-size:11px;line-height:15px;color:#000;letter-spacing:-0.014px;left:30.10px;">Refunds</span>
<span class="t" style="top:530.69px;font-size:11px;line-height:15px;color:#000;right:1381.40px;">0.00</span>
<span class="t" style="top:774.69px;font-size:11px;line-height:15px;color:#000;font-weight:bold;letter-spacing:0.509px;left:11.10px;">Deposit</span>
<span class="t" style="top:774.69px;font-size:11px;line-height:15px;color:#000;font-weight:bold;right:1383.00px;">0.00</span>
<span class="t" style="top:787.69px;font-size:11px;line-height:15px;color:#000;font-weight:bold;letter-spacing:0.533px;left:11.10px;">Profit</span>
<span class="t" style="top:787.69px;font-size:11px;line-height:15px;color:#000;font-weight:bold;right:1383.00px;">0.00</span>
<span class="t" style="top:800.69px;font-size:11px;line-height:15px;color:#000;font-weight:bold;letter-spacing:0.983px;left:11.10px;">Total</span>
<span class="t" style="top:800.69px;font-size:11px;line-height:15px;color:#000;font-weight:bold;right:1383.00px;">0.00</span>
<span class="t" style="top:43.69px;font-size:11px;line-height:15px;color:#fff;letter-spacing:0.276px;left:235.30px;">Book. ref.: &lt;none&gt;</span>
<span class="t" style="top:43.69px;font-size:11px;line-height:15px;color:#000;letter-spacing:-0.181px;left:380.30px;">Direct Clients Search</span>
<span class="t" style="top:71.11px;font-size:17px;line-height:22px;color:#08246b;letter-spacing:0.541px;left:273.50px;">Accommodation Search Results</span>
<span class="t" style="top:91.11px;font-size:17px;line-height:22px;color:#08246b;letter-spacing:0.345px;left:274.60px;">For pax: 1A, 0C, 0I</span>
<span class="t" style="top:96.69px;font-size:11px;line-height:15px;color:#fff;letter-spacing:0.379px;left:1138.30px;">More</span>
<span class="t" style="top:95.69px;font-size:11px;line-height:15px;color:#848284;letter-spacing:0.379px;left:1137.30px;">More</span>
<span class="t" style="top:96.69px;font-size:11px;line-height:15px;color:#fff;letter-spacing:0.353px;left:1173.80px;">Stop</span>
<span class="t" style="top:95.69px;font-size:11px;line-height:15px;color:#848284;letter-spacing:0.353px;left:1172.80px;">Stop</span>
<span class="t" style="top:95.69px;font-size:11px;line-height:15px;color:#000;letter-spacing:-0.033px;left:1205.30px;">Erase Filtered Out</span>
<span class="t" style="top:95.69px;font-size:11px;line-height:15px;color:#000;letter-spacing:-0.131px;left:1303.30px;">Facilities Filter</span>
<span class="t" style="top:95.69px;font-size:11px;line-height:15px;color:#000;letter-spacing:-0.248px;left:1390.10px;">Basket</span>
<span class="t" style="top:95.69px;font-size:11px;line-height:15px;color:#000;letter-spacing:-0.100px;left:1433.10px;">Nett Price</span>
<span class="t" style="top:95.69px;font-size:11px;line-height:15px;color:#000;letter-spacing:0.011px;left:1499.00px;">Navigate</span>
<span class="t" style="top:95.69px;font-size:11px;line-height:15px;color:#000;letter-spacing:-0.356px;left:1553.00px;">Close</span>
<span class="t" style="top:130.69px;font-size:11px;line-height:15px;color:#000;font-weight:bold;letter-spacing:0.556px;left:216.30px;">Search results: 13/13</span>
<span class="t" style="top:151.69px;font-size:11px;line-height:15px;color:#000;letter-spacing:0.109px;left:221.30px;">Resort</span>
<span class="t" style="top:167.69px;font-size:11px;line-height:15px;color:#fff;letter-spacing:0.295px;left:221.30px;">Orlando Ar...</span>
<span class="t" style="top:182.69px;font-size:11px;line-height:15px;color:#000;letter-spacing:-0.575px;left:221.30px;">Kissimmee</span>
<span class="t" style="top:197.69px;font-size:11px;line-height:15px;color:#000;letter-spacing:0.295px;left:221.30px;">Orlando Ar...</span>
<span class="t" style="top:212.69px;font-size:11px;line-height:15px;color:#000;letter-spacing:-0.575px;left:221.30px;">Kissimmee</span>
<span class="t" style="top:227.69px;font-size:11px;line-height:15px;color:#000;letter-spacing:-0.575px;left:221.30px;">Kissimmee</span>
<span class="t" style="top:242.69px;font-size:11px;line-height:15px;color:#000;letter-spacing:0.295px;left:221.30px;">Orlando Ar...</span>
<span class="t" style="top:257.69px;font-size:11px;line-height:15px;color:#000;letter-spacing:-0.575px;left:221.30px;">Kissimmee</span>
<span class="t" style="top:272.69px;font-size:11px;line-height:15px;color:#000;letter-spacing:0.295px;left:221.30px;">Orlando Ar...</span>
<span class="t" style="top:287.69px;font-size:11px;line-height:15px;color:#000;letter-spacing:0.295px;left:221.30px;">Orlando Ar...</span>
<span class="t" style="top:302.69px;font-size:11px;line-height:15px;color:#000;letter-spacing:0.295px;left:221.30px;">Orlando Ar...</span>
<span class="t" style="top:317.69px;font-size:11px;line-height:15px;color:#000;letter-spacing:0.295px;left:221.30px;">Orlando Ar...</span>
<span class="t" style="top:332.69px;font-size:11px;line-height:15px;color:#000;letter-spacing:0.295px;left:221.30px;">Orlando Ar...</span>
<span class="t" style="top:347.69px;font-size:11px;line-height:15px;color:#000;letter-spacing:0.295px;left:221.30px;">Orlando Ar...</span>
<span class="t" style="top:151.69px;font-size:11px;line-height:15px;color:#000;letter-spacing:-0.265px;left:296.30px;">Accommodation</span>
<span class="t" style="top:167.69px;font-size:11px;line-height:15px;color:#fff;letter-spacing:0.039px;left:296.30px;">High Grove Executiv...</span>
<span class="t" style="top:182.69px;font-size:11px;line-height:15px;color:#000;letter-spacing:0.039px;left:296.30px;">High Grove Executiv...</span>
<span class="t" style="top:197.69px;font-size:11px;line-height:15px;color:#000;letter-spacing:0.039px;left:296.30px;">High Grove Executiv...</span>
<span class="t" style="top:212.69px;font-size:11px;line-height:15px;color:#000;letter-spacing:0.039px;left:296.30px;">High Grove Executiv...</span>
<span class="t" style="top:227.69px;font-size:11px;line-height:15px;color:#000;letter-spacing:0.039px;left:296.30px;">High Grove Executiv...</span>
<span class="t" style="top:242.69px;font-size:11px;line-height:15px;color:#000;left:296.30px;">High Grove - Ocean -...</span>
<span class="t" style="top:257.69px;font-size:11px;line-height:15px;color:#000;letter-spacing:0.039px;left:296.30px;">High Grove Executiv...</span>
<span class="t" style="top:272.69px;font-size:11px;line-height:15px;color:#000;left:296.30px;">High Grove - Ocean -...</span>
<span class="t" style="top:287.69px;font-size:11px;line-height:15px;color:#000;left:296.30px;">High Grove - Ocean -...</span>
<span class="t" style="top:302.69px;font-size:11px;line-height:15px;color:#000;left:296.30px;">High Grove - Ocean -...</span>
<span class="t" style="top:317.69px;font-size:11px;line-height:15px;color:#000;left:296.30px;">High Grove - Ocean -...</span>
<span class="t" style="top:332.69px;font-size:11px;line-height:15px;color:#000;left:296.30px;">High Grove - Ocean -...</span>
<span class="t" style="top:347.69px;font-size:11px;line-height:15px;color:#000;left:296.30px;">High Grove - Ocean -...</span>
<span class="t" style="top:151.69px;font-size:11px;line-height:15px;color:#000;letter-spacing:0.411px;left:416.30px;">Rati...</span>
<span class="t" style="top:167.69px;font-size:11px;line-height:15px;color:#fff;letter-spacing:0.515px;left:416.30px;">Exe...</span>
<span class="t" style="top:182.69px;font-size:11px;line-height:15px;color:#000;letter-spacing:0.827px;left:416.30px;">3.5</span>
<span class="t" style="top:197.69px;font-size:11px;line-height:15px;color:#000;letter-spacing:0.515px;left:416.30px;">Exe...</span>
<span class="t" style="top:212.69px;font-size:11px;line-height:15px;color:#000;letter-spacing:0.827px;left:416.30px;">3.5</span>
<span class="t" style="top:227.69px;font-size:11px;line-height:15px;color:#000;letter-spacing:0.827px;left:416.30px;">3.7</span>
<span class="t" style="top:242.69px;font-size:11px;line-height:15px;color:#000;letter-spacing:0.393px;left:416.30px;">Unk...</span>
<span class="t" style="top:257.69px;font-size:11px;line-height:15px;color:#000;letter-spacing:0.827px;left:416.30px;">3.7</span>
<span class="t" style="top:272.69px;font-size:11px;line-height:15px;color:#000;letter-spacing:0.393px;left:416.30px;">Unk...</span>
<span class="t" style="top:287.69px;font-size:11px;line-height:15px;color:#000;letter-spacing:0.393px;left:416.30px;">Unk...</span>
<span class="t" style="top:302.69px;font-size:11px;line-height:15px;color:#000;letter-spacing:0.393px;left:416.30px;">Unk...</span>
<span class="t" style="top:317.69px;font-size:11px;line-height:15px;color:#000;letter-spacing:0.393px;left:416.30px;">Unk...</span>
<span class="t" style="top:332.69px;font-size:11px;line-height:15px;color:#000;letter-spacing:0.393px;left:416.30px;">Unk...</span>
<span class="t" style="top:347.69px;font-size:11px;line-height:15px;color:#000;letter-spacing:0.393px;left:416.30px;">Unk...</span>
<span class="t" style="top:151.69px;font-size:11px;line-height:15px;color:#000;letter-spacing:-0.165px;left:456.30px;">Board</span>
<span class="t" style="top:167.69px;font-size:11px;line-height:15px;color:#fff;letter-spacing:-0.323px;left:456.30px;">Room Only</span>
<span class="t" style="top:182.69px;font-size:11px;line-height:15px;color:#000;letter-spacing:-0.095px;left:456.30px;">Self Catering</span>
<span class="t" style="top:197.69px;font-size:11px;line-height:15px;color:#000;letter-spacing:-0.323px;left:456.30px;">Room Only</span>
<span class="t" style="top:212.69px;font-size:11px;line-height:15px;color:#000;letter-spacing:-0.095px;left:456.30px;">Self Catering</span>
<span class="t" style="top:227.69px;font-size:11px;line-height:15px;color:#000;letter-spacing:-0.297px;left:456.30px;">Roomonly</span>
<span class="t" style="top:242.69px;font-size:11px;line-height:15px;color:#000;letter-spacing:-0.152px;left:456.30px;">Unknown</span>
<span class="t" style="top:257.69px;font-size:11px;line-height:15px;color:#000;letter-spacing:-0.297px;left:456.30px;">Roomonly</span>
<span class="t" style="top:272.69px;font-size:11px;line-height:15px;color:#000;letter-spacing:-0.152px;left:456.30px;">Unknown</span>
<span class="t" style="top:287.69px;font-size:11px;line-height:15px;color:#000;letter-spacing:-0.152px;left:456.30px;">Unknown</span>
<span class="t" style="top:302.69px;font-size:11px;line-height:15px;color:#000;letter-spacing:-0.152px;left:456.30px;">Unknown</span>
<span class="t" style="top:317.69px;font-size:11px;line-height:15px;color:#000;letter-spacing:-0.152px;left:456.30px;">Unknown</span>
<span class="t" style="top:332.69px;font-size:11px;line-height:15px;color:#000;letter-spacing:-0.152px;left:456.30px;">Unknown</span>
<span class="t" style="top:347.69px;font-size:11px;line-height:15px;color:#000;letter-spacing:-0.152px;left:456.30px;">Unknown</span>
<span class="t" style="top:151.69px;font-size:11px;line-height:15px;color:#000;letter-spacing:-0.075px;left:531.30px;">Room type</span>
<span class="t" style="top:167.69px;font-size:11px;line-height:15px;color:#fff;letter-spacing:-0.073px;left:531.30px;">4 Bedroom Exe...</span>
<span class="t" style="top:182.69px;font-size:11px;line-height:15px;color:#000;letter-spacing:-0.073px;left:531.30px;">4 Bedroom Exe...</span>
<span class="t" style="top:197.69px;font-size:11px;line-height:15px;color:#000;letter-spacing:-0.073px;left:531.30px;">5 Bedroom Exe...</span>
<span class="t" style="top:212.69px;font-size:11px;line-height:15px;color:#000;letter-spacing:-0.073px;left:531.30px;">5 Bedroom Exe...</span>
<span class="t" style="top:227.69px;font-size:11px;line-height:15px;color:#000;letter-spacing:0.084px;left:531.30px;">Standard, 4 Be...</span>
<span class="t" style="top:242.69px;font-size:11px;line-height:15px;color:#000;letter-spacing:-0.015px;left:531.30px;">High Grove - O...</span>
<span class="t" style="top:257.69px;font-size:11px;line-height:15px;color:#000;letter-spacing:0.084px;left:531.30px;">Standard, 5 Be...</span>
<span class="t" style="top:272.69px;font-size:11px;line-height:15px;color:#000;letter-spacing:-0.015px;left:531.30px;">High Grove - O...</span>
<span class="t" style="top:287.69px;font-size:11px;line-height:15px;color:#000;letter-spacing:-0.015px;left:531.30px;">High Grove - O...</span>
<span class="t" style="top:302.69px;font-size:11px;line-height:15px;color:#000;letter-spacing:-0.015px;left:531.30px;">High Grove - O...</span>
<span class="t" style="top:317.69px;font-size:11px;line-height:15px;color:#000;letter-spacing:-0.015px;left:531.30px;">High Grove - O...</span>
<span class="t" style="top:332.69px;font-size:11px;line-height:15px;color:#000;letter-spacing:-0.015px;left:531.30px;">High Grove - O...</span>
<span class="t" style="top:347.69px;font-size:11px;line-height:15px;color:#000;letter-spacing:-0.015px;left:531.30px;">High Grove - O...</span>
<span class="t" style="top:151.69px;font-size:11px;line-height:15px;color:#000;letter-spacing:-0.745px;left:621.30px;">DOW</span>
<span class="t" style="top:167.69px;font-size:11px;line-height:15px;color:#fff;letter-spacing:0.039px;left:621.30px;">Wed</span>
<span class="t" style="top:182.69px;font-size:11px;line-height:15px;color:#000;letter-spacing:0.039px;left:621.30px;">Wed</span>
<span class="t" style="top:197.69px;font-size:11px;line-height:15px;color:#000;letter-spacing:0.039px;left:621.30px;">Wed</span>
<span class="t" style="top:212.69px;font-size:11px;line-height:15px;color:#000;letter-spacing:0.039px;left:621.30px;">Wed</span>
<span class="t" style="top:227.69px;font-size:11px;line-height:15px;color:#000;letter-spacing:0.039px;left:621.30px;">Wed</span>
<span class="t" style="top:242.69px;font-size:11px;line-height:15px;color:#000;letter-spacing:0.039px;left:621.30px;">Wed</span>
<span class="t" style="top:257.69px;font-size:11px;line-height:15px;color:#000;letter-spacing:0.039px;left:621.30px;">Wed</span>
<span class="t" style="top:272.69px;font-size:11px;line-height:15px;color:#000;letter-spacing:0.039px;left:621.30px;">Wed</span>
<span class="t" style="top:287.69px;font-size:11px;line-height:15px;color:#000;letter-spacing:0.039px;left:621.30px;">Wed</span>
<span class="t" style="top:302.69px;font-size:11px;line-height:15px;color:#000;letter-spacing:0.039px;left:621.30px;">Wed</span>
<span class="t" style="top:317.69px;font-size:11px;line-height:15px;color:#000;letter-spacing:0.039px;left:621.30px;">Wed</span>
<span class="t" style="top:332.69px;font-size:11px;line-height:15px;color:#000;letter-spacing:0.039px;left:621.30px;">Wed</span>
<span class="t" style="top:347.69px;font-size:11px;line-height:15px;color:#000;letter-spacing:0.039px;left:621.30px;">Wed</span>
<span class="t" style="top:151.69px;font-size:11px;line-height:15px;color:#000;letter-spacing:-0.132px;left:656.30px;">Check In</span>
<span class="t" style="top:167.69px;font-size:11px;line-height:15px;color:#fff;letter-spacing:0.149px;left:656.30px;">20/09/2017</span>
<span class="t" style="top:182.69px;font-size:11px;line-height:15px;color:#000;letter-spacing:0.149px;left:656.30px;">20/09/2017</span>
<span class="t" style="top:197.69px;font-size:11px;line-height:15px;color:#000;letter-spacing:0.149px;left:656.30px;">20/09/2017</span>
<span class="t" style="top:212.69px;font-size:11px;line-height:15px;color:#000;letter-spacing:0.149px;left:656.30px;">20/09/2017</span>
<span class="t" style="top:227.69px;font-size:11px;line-height:15px;color:#000;letter-spacing:0.149px;left:656.30px;">20/09/2017</span>
<span class="t" style="top:242.69px;font-size:11px;line-height:15px;color:#000;letter-spacing:0.149px;left:656.30px;">20/09/2017</span>
<span class="t" style="top:257.69px;font-size:11px;line-height:15px;color:#000;letter-spacing:0.149px;left:656.30px;">20/09/2017</span>
<span class="t" style="top:272.69px;font-size:11px;line-height:15px;color:#000;letter-spacing:0.149px;left:656.30px;">20/09/2017</span>
<span class="t" style="top:287.69px;font-size:11px;line-height:15px;color:#000;letter-spacing:0.149px;left:656.30px;">20/09/2017</span>
<span class="t" style="top:302.69px;font-size:11px;line-height:15px;color:#000;letter-spacing:0.149px;left:656.30px;">20/09/2017</span>
<span class="t" style="top:317.69px;font-size:11px;line-height:15px;color:#000;letter-spacing:0.149px;left:656.30px;">20/09/2017</span>
<span class="t" style="top:332.69px;font-size:11px;line-height:15px;color:#000;letter-spacing:0.149px;left:656.30px;">20/09/2017</span>
<span class="t" style="top:347.69px;font-size:11px;line-height:15px;color:#000;letter-spacing:0.149px;left:656.30px;">20/09/2017</span>
<span class="t" style="top:151.69px;font-size:11px;line-height:15px;color:#000;letter-spacing:-0.745px;left:724.30px;">DOW</span>
<span class="t" style="top:167.69px;font-size:11px;line-height:15px;color:#fff;letter-spacing:0.039px;left:724.30px;">Wed</span>
<span class="t" style="top:182.69px;font-size:11px;line-height:15px;color:#000;letter-spacing:0.039px;left:724.30px;">Wed</span>
<span class="t" style="top:197.69px;font-size:11px;line-height:15px;color:#000;letter-spacing:0.039px;left:724.30px;">Wed</span>
<span class="t" style="top:212.69px;font-size:11px;line-height:15px;color:#000;letter-spacing:0.039px;left:724.30px;">Wed</span>
<span class="t" style="top:227.69px;font-size:11px;line-height:15px;color:#000;letter-spacing:0.039px;left:724.30px;">Wed</span>
<span class="t" style="top:242.69px;font-size:11px;line-height:15px;color:#000;letter-spacing:0.039px;left:724.30px;">Wed</span>
<span class="t" style="top:257.69px;font-size:11px;line-height:15px;color:#000;letter-spacing:0.039px;left:724.30px;">Wed</span>
<span class="t" style="top:272.69px;font-size:11px;line-height:15px;color:#000;letter-spacing:0.039px;left:724.30px;">Wed</span>
<span class="t" style="top:287.69px;font-size:11px;line-height:15px;color:#000;letter-spacing:0.039px;left:724.30px;">Wed</span>
<span class="t" style="top:302.69px;font-size:11px;line-height:15px;color:#000;letter-spacing:0.039px;left:724.30px;">Wed</span>
<span class="t" style="top:317.69px;font-size:11px;line-height:15px;color:#000;letter-spacing:0.039px;left:724.30px;">Wed</span>
<span class="t" style="top:332.69px;font-size:11px;line-height:15px;color:#000;letter-spacing:0.039px;left:724.30px;">Wed</span>
<span class="t" style="top:347.69px;font-size:11px;line-height:15px;color:#000;letter-spacing:0.039px;left:724.30px;">Wed</span>
<span class="t" style="top:151.69px;font-size:11px;line-height:15px;color:#000;letter-spacing:-0.190px;left:759.30px;">Check Out</span>
<span class="t" style="top:167.69px;font-size:11px;line-height:15px;color:#fff;letter-spacing:0.171px;left:759.30px;">27/09/2017</span>
<span class="t" style="top:182.69px;font-size:11px;line-height:15px;color:#000;letter-spacing:0.171px;left:759.30px;">27/09/2017</span>
<span class="t" style="top:197.69px;font-size:11px;line-height:15px;color:#000;letter-spacing:0.171px;left:759.30px;">27/09/2017</span>
<span class="t" style="top:212.69px;font-size:11px;line-height:15px;color:#000;letter-spacing:0.171px;left:759.30px;">27/09/2017</span>
<span class="t" style="top:227.69px;font-size:11px;line-height:15px;color:#000;letter-spacing:0.171px;left:759.30px;">27/09/2017</span>
<span class="t" style="top:242.69px;font-size:11px;line-height:15px;color:#000;letter-spacing:0.171px;left:759.30px;">27/09/2017</span>
<span class="t" style="top:257.69px;font-size:11px;line-height:15px;color:#000;letter-spacing:0.171px;left:759.30px;">27/09/2017</span>
<span class="t" style="top:272.69px;font-size:11px;line-height:15px;color:#000;letter-spacing:0.171px;left:759.30px;">27/09/2017</span>
<span class="t" style="top:287.69px;font-size:11px;line-height:15px;color:#000;letter-spacing:0.171px;left:759.30px;">27/09/2017</span>
<span class="t" style="top:302.69px;font-size:11px;line-height:15px;color:#000;letter-spacing:0.171px;left:759.30px;">27/09/2017</span>
<span class="t" style="top:317.69px;font-size:11px;line-height:15px;color:#000;letter-spacing:0.171px;left:759.30px;">27/09/2017</span>
<span class="t" style="top:332.69px;font-size:11px;line-height:15px;color:#000;letter-spacing:0.171px;left:759.30px;">27/09/2017</span>
<span class="t" style="top:347.69px;font-size:11px;line-height:15px;color:#000;letter-spacing:0.171px;left:759.30px;">27/09/2017</span>
<span class="t" style="top:151.69px;font-size:11px;line-height:15px;color:#000;letter-spacing:-0.308px;left:827.30px;">Supplier</span>
<span class="t" style="top:167.69px;font-size:11px;line-height:15px;color:#fff;letter-spacing:-0.032px;left:827.30px;">Ocean B...</span>
<span class="t" style="top:182.69px;font-size:11px;line-height:15px;color:#000;letter-spacing:-0.106px;left:827.30px;">Get A Bed</span>
<span class="t" style="top:197.69px;font-size:11px;line-height:15px;color:#000;letter-spacing:-0.032px;left:827.30px;">Ocean B...</span>
<span class="t" style="top:212.69px;font-size:11px;line-height:15px;color:#000;letter-spacing:-0.106px;left:827.30px;">Get A Bed</span>
<span class="t" style="top:227.69px;font-size:11px;line-height:15px;color:#000;letter-spacing:0.226px;left:827.30px;">Tourico ...</span>
<span class="t" style="top:242.69px;font-size:11px;line-height:15px;color:#000;letter-spacing:-0.032px;left:827.30px;">Ocean B...</span>
<span class="t" style="top:257.69px;font-size:11px;line-height:15px;color:#000;letter-spacing:0.226px;left:827.30px;">Tourico ...</span>
<span class="t" style="top:272.69px;font-size:11px;line-height:15px;color:#000;letter-spacing:-0.032px;left:827.30px;">Ocean B...</span>
<span class="t" style="top:287.69px;font-size:11px;line-height:15px;color:#000;letter-spacing:-0.032px;left:827.30px;">Ocean B...</span>
<span class="t" style="top:302.69px;font-size:11px;line-height:15px;color:#000;letter-spacing:-0.032px;left:827.30px;">Ocean B...</span>
<span class="t" style="top:317.69px;font-size:11px;line-height:15px;color:#000;letter-spacing:-0.032px;left:827.30px;">Ocean B...</span>
<span class="t" style="top:332.69px;font-size:11px;line-height:15px;color:#000;letter-spacing:-0.032px;left:827.30px;">Ocean B...</span>
<span class="t" style="top:347.69px;font-size:11px;line-height:15px;color:#000;letter-spacing:-0.032px;left:827.30px;">Ocean B...</span>
<span class="t" style="top:151.69px;font-size:11px;line-height:15px;color:#000;letter-spacing:-0.550px;left:894.17px;">Er</span>
<span class="t" style="top:165.80px;font-size:15px;line-height:19px;color:#fff;left:896.50px;">*</span>
<span class="t" style="top:180.80px;font-size:15px;line-height:19px;color:#000;left:896.50px;">*</span>
<span class="t" style="top:195.80px;font-size:15px;line-height:19px;color:#000;left:896.50px;">*</span>
<span class="t" style="top:210.80px;font-size:15px;line-height:19px;color:#000;left:896.50px;">*</span>
<span class="t" style="top:151.69px;font-size:11px;line-height:15px;color:#000;letter-spacing:-1.000px;left:917.05px;">NR</span>
<span class="t" style="top:151.69px;font-size:11px;line-height:15px;color:#000;letter-spacing:-1.000px;left:942.30px;">MS</span>
<span class="t" style="top:151.69px;font-size:11px;line-height:15px;color:#000;letter-spacing:-0.278px;left:990.55px;">Price</span>
<span class="t" style="top:167.69px;font-size:11px;line-height:15px;color:#fff;letter-spacing:0.209px;left:979.80px;">596.72</span>
<span class="t" style="top:182.69px;font-size:11px;line-height:15px;color:#000;letter-spacing:0.209px;left:979.80px;">597.13</span>
<span class="t" style="top:197.69px;font-size:11px;line-height:15px;color:#000;letter-spacing:0.209px;left:979.80px;">654.10</span>
<span class="t" style="top:212.69px;font-size:11px;line-height:15px;color:#000;letter-spacing:0.209px;left:979.80px;">654.54</span>
<span class="t" style="top:227.69px;font-size:11px;line-height:15px;color:#000;letter-spacing:0.209px;left:979.80px;">738.26</span>
<span class="t" style="top:242.69px;font-size:11px;line-height:15px;color:#000;letter-spacing:0.209px;left:979.80px;">786.57</span>
<span class="t" style="top:257.69px;font-size:11px;line-height:15px;color:#000;letter-spacing:0.209px;left:979.80px;">799.28</span>
<span class="t" style="top:272.69px;font-size:11px;line-height:15px;color:#000;letter-spacing:0.209px;left:979.80px;">823.19</span>
<span class="t" style="top:287.69px;font-size:11px;line-height:15px;color:#000;letter-spacing:0.209px;left:979.80px;">823.19</span>
<span class="t" style="top:302.69px;font-size:11px;line-height:15px;color:#000;letter-spacing:0.209px;left:979.80px;">896.43</span>
<span class="t" style="top:317.69px;font-size:11px;line-height:15px;color:#000;letter-spacing:0.209px;left:979.80px;">969.67</span>
<span class="t" style="top:332.69px;font-size:11px;line-height:15px;color:#000;letter-spacing:0.209px;left:979.80px;">974.04</span>
<span class="t" style="top:347.69px;font-size:11px;line-height:15px;color:#000;letter-spacing:0.209px;left:979.80px;">981.36</span>
<span class="t" style="top:151.69px;font-size:11px;line-height:15px;color:#000;letter-spacing:-0.153px;left:1023.80px;">Incl.Fl.PP</span>
<span class="t" style="top:167.69px;font-size:11px;line-height:15px;color:#fff;letter-spacing:0.209px;left:1034.80px;">596.72</span>
<span class="t" style="top:182.69px;font-size:11px;line-height:15px;color:#000;letter-spacing:0.209px;left:1034.80px;">597.13</span>
<span class="t" style="top:197.69px;font-size:11px;line-height:15px;color:#000;letter-spacing:0.209px;left:1034.80px;">654.10</span>
<span class="t" style="top:212.69px;font-size:11px;line-height:15px;color:#000;letter-spacing:0.209px;left:1034.80px;">654.54</span>
<span class="t" style="top:227.69px;font-size:11px;line-height:15px;color:#000;letter-spacing:0.209px;left:1034.80px;">738.26</span>
<span class="t" style="top:242.69px;font-size:11px;line-height:15px;color:#000;letter-spacing:0.209px;left:1034.80px;">786.57</span>
<span class="t" style="top:257.69px;font-size:11px;line-height:15px;color:#000;letter-spacing:0.209px;left:1034.80px;">799.28</span>
<span class="t" style="top:272.69px;font-size:11px;line-height:15px;color:#000;letter-spacing:0.209px;left:1034.80px;">823.19</span>
<span class="t" style="top:287.69px;font-size:11px;line-height:15px;color:#000;letter-spacing:0.209px;left:1034.80px;">823.19</span>
<span class="t" style="top:302.69px;font-size:11px;line-height:15px;color:#000;letter-spacing:0.209px;left:1034.80px;">896.43</span>
<span class="t" style="top:317.69px;font-size:11px;line-height:15px;color:#000;letter-spacing:0.209px;left:1034.80px;">969.67</span>
<span class="t" style="top:332.69px;font-size:11px;line-height:15px;color:#000;letter-spacing:0.209px;left:1034.80px;">974.04</span>
<span class="t" style="top:347.69px;font-size:11px;line-height:15px;color:#000;letter-spacing:0.209px;left:1034.80px;">981.36</span>
<span class="t" style="top:151.69px;font-size:11px;line-height:15px;color:#000;letter-spacing:-0.088px;left:1094.30px;">Basket</span>
<span class="t" style="top:167.69px;font-size:11px;line-height:15px;color:#fff;letter-spacing:0.209px;left:1099.80px;">596.72</span>
<span class="t" style="top:182.69px;font-size:11px;line-height:15px;color:#000;letter-spacing:0.209px;left:1099.80px;">597.13</span>
<span class="t" style="top:197.69px;font-size:11px;line-height:15px;color:#000;letter-spacing:0.209px;left:1099.80px;">654.10</span>
<span class="t" style="top:212.69px;font-size:11px;line-height:15px;color:#000;letter-spacing:0.209px;left:1099.80px;">654.54</span>
<span class="t" style="top:227.69px;font-size:11px;line-height:15px;color:#000;letter-spacing:0.209px;left:1099.80px;">738.26</span>
<span class="t" style="top:242.69px;font-size:11px;line-height:15px;color:#000;letter-spacing:0.209px;left:1099.80px;">786.57</span>
<span class="t" style="top:257.69px;font-size:11px;line-height:15px;color:#000;letter-spacing:0.209px;left:1099.80px;">799.28</span>
<span class="t" style="top:272.69px;font-size:11px;line-height:15px;color:#000;letter-spacing:0.209px;left:1099.80px;">823.19</span>
<span class="t" style="top:287.69px;font-size:11px;line-height:15px;color:#000;letter-spacing:0.209px;left:1099.80px;">823.19</span>
<span class="t" style="top:302.69px;font-size:11px;line-height:15px;color:#000;letter-spacing:0.209px;left:1099.80px;">896.43</span>
<span class="t" style="top:317.69px;font-size:11px;line-height:15px;color:#000;letter-spacing:0.209px;left:1099.80px;">969.67</span>
<span class="t" style="top:332.69px;font-size:11px;line-height:15px;color:#000;letter-spacing:0.209px;left:1099.80px;">974.04</span>
<span class="t" style="top:347.69px;font-size:11px;line-height:15px;color:#000;letter-spacing:0.209px;left:1099.80px;">981.36</span>
<span class="t" style="top:151.69px;font-size:11px;line-height:15px;color:#000;letter-spacing:-0.121px;left:1147.55px;">Discount</span>
<span class="t" style="top:167.69px;font-size:11px;line-height:15px;color:#fff;letter-spacing:0.343px;left:1167.05px;">0.00</span>
<span class="t" style="top:182.69px;font-size:11px;line-height:15px;color:#000;letter-spacing:0.343px;left:1167.05px;">0.00</span>
<span class="t" style="top:197.69px;font-size:11px;line-height:15px;color:#000;letter-spacing:0.343px;left:1167.05px;">0.00</span>
<span class="t" style="top:212.69px;font-size:11px;line-height:15px;color:#000;letter-spacing:0.343px;left:1167.05px;">0.00</span>
<span class="t" style="top:227.69px;font-size:11px;line-height:15px;color:#000;letter-spacing:0.343px;left:1167.05px;">0.00</span>
<span class="t" style="top:242.69px;font-size:11px;line-height:15px;color:#000;letter-spacing:0.343px;left:1167.05px;">0.00</span>
<span class="t" style="top:257.69px;font-size:11px;line-height:15px;color:#000;letter-spacing:0.343px;left:1167.05px;">0.00</span>
<span class="t" style="top:272.69px;font-size:11px;line-height:15px;color:#000;letter-spacing:0.343px;left:1167.05px;">0.00</span>
<span class="t" style="top:287.69px;font-size:11px;line-height:15px;color:#000;letter-spacing:0.343px;left:1167.05px;">0.00</span>
<span class="t" style="top:302.69px;font-size:11px;line-height:15px;color:#000;letter-spacing:0.343px;left:1167.05px;">0.00</span>
<span class="t" style="top:317.69px;font-size:11px;line-height:15px;color:#000;letter-spacing:0.343px;left:1167.05px;">0.00</span>
<span class="t" style="top:332.69px;font-size:11px;line-height:15px;color:#000;letter-spacing:0.343px;left:1167.05px;">0.00</span>
<span class="t" style="top:347.69px;font-size:11px;line-height:15px;color:#000;letter-spacing:0.343px;left:1167.05px;">0.00</span>
<span class="t" style="top:151.69px;font-size:11px;line-height:15px;color:#000;letter-spacing:0.825px;left:1198.17px;">Of</span>
<span class="t" style="top:151.69px;font-size:11px;line-height:15px;color:#000;letter-spacing:0.089px;left:1219.30px;">Contract</span>
<span class="t" style="top:167.69px;font-size:11px;line-height:15px;color:#fff;letter-spacing:-1.000px;left:1219.30px;">XML</span>
<span class="t" style="top:182.69px;font-size:11px;line-height:15px;color:#000;letter-spacing:-1.000px;left:1219.30px;">XML</span>
<span class="t" style="top:197.69px;font-size:11px;line-height:15px;color:#000;letter-spacing:-1.000px;left:1219.30px;">XML</span>
<span class="t" style="top:212.69px;font-size:11px;line-height:15px;color:#000;letter-spacing:-1.000px;left:1219.30px;">XML</span>
<span class="t" style="top:227.69px;font-size:11px;line-height:15px;color:#000;letter-spacing:-1.000px;left:1219.30px;">XML</span>
<span class="t" style="top:242.69px;font-size:11px;line-height:15px;color:#000;letter-spacing:-1.000px;left:1219.30px;">XML</span>
<span class="t" style="top:257.69px;font-size:11px;line-height:15px;color:#000;letter-spacing:-1.000px;left:1219.30px;">XML</span>
<span class="t" style="top:272.69px;font-size:11px;line-height:15px;color:#000;letter-spacing:-1.000px;left:1219.30px;">XML</span>
<span class="t" style="top:287.69px;font-size:11px;line-height:15px;color:#000;letter-spacing:-1.000px;left:1219.30px;">XML</span>
<span class="t" style="top:302.69px;font-size:11px;line-height:15px;color:#000;letter-spacing:-1.000px;left:1219.30px;">XML</span>
<span class="t" style="top:317.69px;font-size:11px;line-height:15px;color:#000;letter-spacing:-1.000px;left:1219.30px;">XML</span>
<span class="t" style="top:332.69px;font-size:11px;line-height:15px;color:#000;letter-spacing:-1.000px;left:1219.30px;">XML</span>
<span class="t" style="top:347.69px;font-size:11px;line-height:15px;color:#000;letter-spacing:-1.000px;left:1219.30px;">XML</span>
<span class="t" style="top:151.69px;font-size:11px;line-height:15px;color:#000;letter-spacing:-0.098px;left:1279.30px;">Act. Supplier</span>
<span class="t" style="top:777.69px;font-size:11px;line-height:15px;color:#000;letter-spacing:0.041px;left:221.80px;">First portion: 6.2 sec, total search time: 27.6 sec</span>
<span class="t" style="top:802.69px;font-size:11px;line-height:15px;color:#000;letter-spacing:-0.394px;left:217.80px;">Summary</span>
<span class="t" style="top:802.69px;font-size:11px;line-height:15px;color:#000;letter-spacing:-0.232px;left:270.30px;">Search</span>
<span class="t" style="top:802.69px;font-size:11px;line-height:15px;color:#fff;letter-spacing:-0.419px;left:311.30px;">Acc 1A MCO</span>
<span class="t" style="top:802.69px;font-size:11px;line-height:15px;color:#000;letter-spacing:-0.340px;left:377.80px;">Financial Summary</span>
<span class="t" style="top:826.69px;font-size:11px;line-height:15px;color:#000;letter-spacing:-0.096px;left:760.30px;">User: 415 - Hema Yoganathan</span>
<span class="t" style="top:826.69px;font-size:11px;line-height:15px;color:#000;letter-spacing:-0.101px;left:916.30px;">Retailer: &#x27;Ocean-Florida&#x27;</span>
<span class="t" style="top:826.69px;font-size:11px;line-height:15px;color:#000;letter-spacing:-0.047px;left:1042.60px;">Client: none</span>
<span class="t" style="top:826.69px;font-size:11px;line-height:15px;color:#000;left:1540.00px;">14:40 GMT</span>
<span class="t" style="top:867.69px;font-size:11px;line-height:15px;color:#000;font-weight:bold;letter-spacing:1.159px;left:19.80px;">Start</span>
<span class="t" style="top:867.69px;font-size:11px;line-height:15px;color:#000;font-weight:bold;letter-spacing:0.615px;left:101.80px;">Interactive - Ocea...</span>
<span class="t" style="top:859.69px;font-size:11px;line-height:15px;color:#000;letter-spacing:-0.033px;left:1531.10px;">14:40</span>
<span class="t" style="top:875.69px;font-size:11px;line-height:15px;color:#000;letter-spacing:0.182px;left:1515.80px;">22/05/2017</span>
</div>
</div>
</body></html>
